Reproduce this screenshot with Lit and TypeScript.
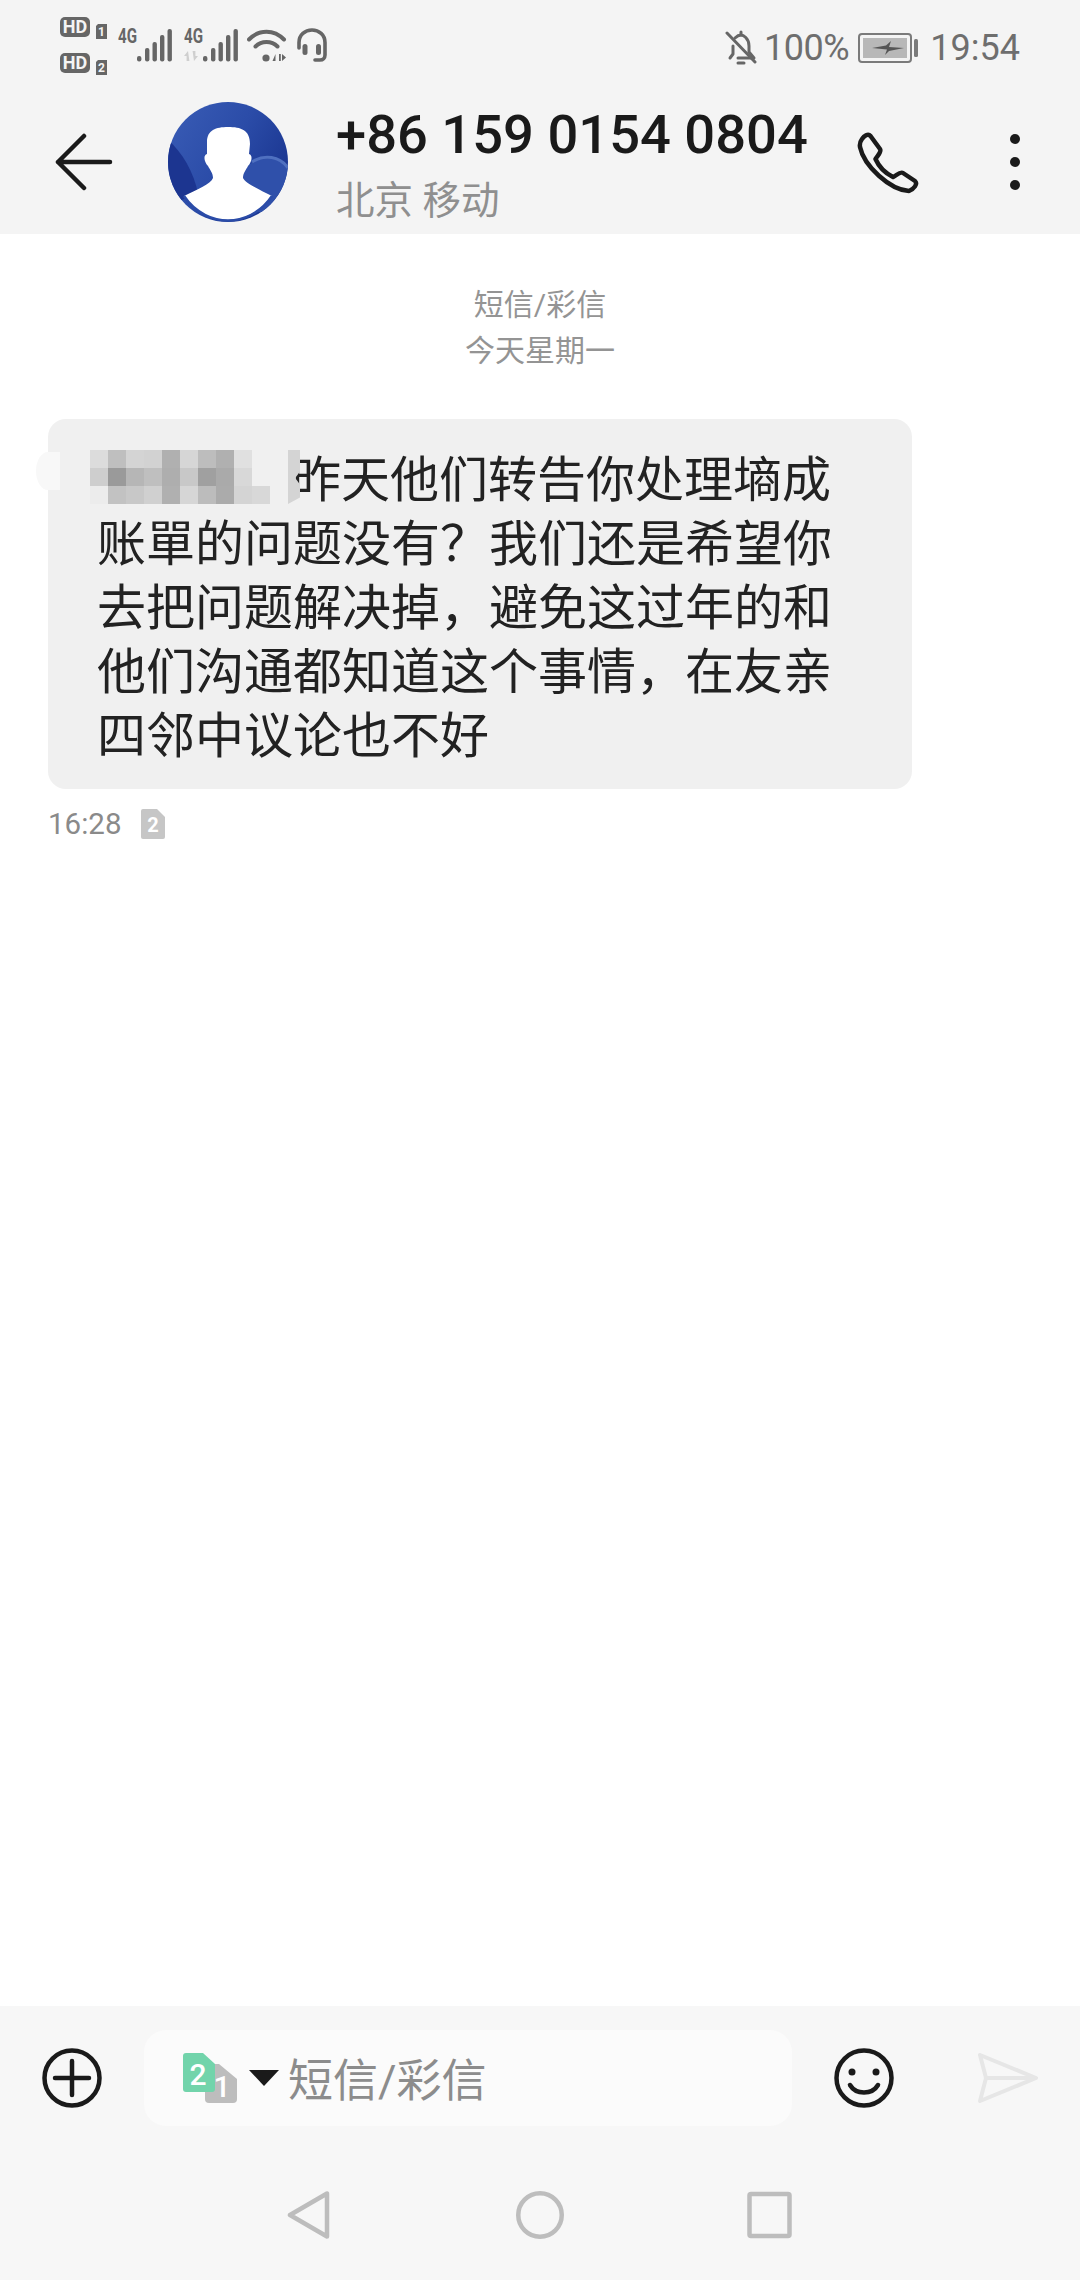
import { LitElement, html, css, svg } from 'lit';
import { customElement } from 'lit/decorators.js';

const MESSAGE_LINES = [
  '昨天他们转告你处理墒成',
  '账單的问题没有？我们还是希望你',
  '去把问题解决掉，避免这过年的和',
  '他们沟通都知道这个事情，在友亲',
  '四邻中议论也不好',
];

// the blurred sender name at the start of the message, row by row
const MOSAIC = [
  ['#dcdcdc', '#bfbfbf', '#d4d4d4', '#d2d2d2', '#b0b0b0', '#d6d6d6', '#bdbdbd', '#b0b0b0', '#e0e0e0', 'transparent'],
  ['#cecece', '#9a9a9a', '#b6b6b6', '#bfbfbf', '#aeaeae', '#c8c8c8', '#a0a0a0', '#aaaaaa', '#d8d8d8', 'transparent'],
  ['#ececec', '#c2c2c2', '#c8c8c8', '#d0d0d0', '#b0b0b0', '#d6d6d6', '#bcbcbc', '#ababab', '#d4d4d4', '#d8d8d8'],
];

const signalBars = (x: number) => svg`
  <rect x="${x}" y="55" width="4.4" height="5.5" rx="2" />
  <rect x="${x + 8}" y="47" width="4.4" height="13.5" rx="2" />
  <rect x="${x + 15.5}" y="41" width="4.4" height="19.5" rx="2" />
  <rect x="${x + 23}" y="34" width="4.4" height="26.5" rx="2" />
  <rect x="${x + 30.5}" y="28" width="4.4" height="32.5" rx="2" />
`;

@customElement('app-root')
export class AppRoot extends LitElement {
  static styles = css`
    :host {
      display: flex;
      flex-direction: column;
      width: 1080px;
      height: 2280px;
      background: #fff;
      font-family: Roboto, 'Noto Sans CJK SC', sans-serif;
      overflow: hidden;
    }

    svg {
      display: block;
      flex: none;
    }

    .top {
      background: #f4f4f4;
      height: 234px;
      flex: none;
    }

    .status {
      height: 90px;
      display: flex;
      align-items: center;
      padding: 0 60px 0 60px;
      color: #6e6e6e;
      font-size: 36px;
    }

    .status-left {
      display: flex;
      align-items: center;
    }

    .status-right {
      margin-left: auto;
      padding-top: 5px;
      display: flex;
      align-items: center;
    }

    .pct {
      margin-left: 7px;
      letter-spacing: -0.4px;
    }

    .battery {
      margin-left: 9px;
    }

    .clock {
      margin-left: 12px;
    }

    .toolbar {
      height: 144px;
      display: flex;
      align-items: center;
      padding-left: 55px;
    }

    .avatar {
      margin-left: 55px;
    }

    .titles {
      margin-left: 48px;
      width: 520px;
      padding-top: 6px;
      display: flex;
      flex-direction: column;
    }

    .number {
      font-size: 54.3px;
      line-height: 60px;
      font-weight: 500;
      color: #1a1a1a;
      white-space: nowrap;
    }

    .carrier {
      font-size: 38.5px;
      line-height: 50px;
      margin-top: 11px;
      color: #8f8f8f;
    }

    .more {
      margin-left: 90px;
    }

    .thread {
      flex: 1;
      padding-top: 48px;
    }

    .notice {
      text-align: center;
      font-size: 30px;
      line-height: 46px;
      color: #949494;
    }

    .bubble {
      position: relative;
      margin: 45px 0 0 48px;
      width: 864px;
      box-sizing: border-box;
      padding: 30px 0 20px 49px;
      background: #f0f0f0;
      border-radius: 18px;
      font-size: 49px;
      line-height: 64px;
      color: #222;
    }

    .line {
      white-space: nowrap;
    }

    .line.first {
      padding-left: 195px;
    }

    .mosaic {
      position: absolute;
      left: 42px;
      top: 31px;
      display: grid;
      grid-template-columns: repeat(10, 18px);
      grid-auto-rows: 18px;
    }

    .sliver {
      position: absolute;
      left: 240px;
      top: 31px;
      width: 12px;
      height: 54px;
      background: #d4d4d4;
      clip-path: polygon(0 0, 100% 0, 100% 40%, 60% 52%, 100% 64%, 100% 88%, 0 100%);
    }

    .smudge {
      position: absolute;
      left: -12px;
      top: 33px;
      width: 24px;
      height: 38px;
      border-radius: 50% 0 0 50%;
      background: #f8f8f8;
    }

    .meta {
      display: flex;
      align-items: center;
      margin: 18px 0 0 48px;
      font-size: 29.5px;
      line-height: 34px;
      color: #8a8a8a;
    }

    .meta svg {
      margin-left: 20px;
    }

    .bottom {
      flex: none;
      background: #f7f7f7;
    }

    .composer {
      height: 143px;
      display: flex;
      align-items: center;
      padding-left: 42px;
    }

    .input {
      margin-left: 42px;
      width: 648px;
      height: 96px;
      box-sizing: border-box;
      padding-left: 39px;
      display: flex;
      align-items: center;
      background: #fbfbfb;
      border-radius: 22px;
      font-size: 45px;
      color: #8c8c8c;
    }

    .caret {
      margin: 0 9px 0 12px;
    }

    .smiley {
      margin-left: 42px;
    }

    .send {
      margin-left: 84px;
    }

    .nav {
      height: 131px;
      display: flex;
      align-items: center;
      justify-content: center;
      gap: 183px;
    }
  `;

  private renderStatusIcons() {
    return html`
      <svg width="48" height="60" viewBox="60 15 48 60">
        <g fill="#666">
          <rect x="60" y="17" width="30" height="20" rx="5" />
          <rect x="60" y="53" width="30" height="20" rx="5" />
          <path d="M98 24h9v15H96V26z" />
          <path d="M98 60h9v15H96V62z" />
        </g>
        <g fill="#f4f4f4" font-family="Roboto" font-weight="700" text-anchor="middle">
          <text x="75" y="33" font-size="18">HD</text>
          <text x="75" y="69" font-size="18">HD</text>
          <text x="101.5" y="36" font-size="12">1</text>
          <text x="101.5" y="72" font-size="12">2</text>
        </g>
      </svg>
      <svg style="margin-left:10px" width="54" height="56" viewBox="118 16 54 56" fill="#666">
        <text x="118" y="42" font-family="Roboto" font-weight="700" font-size="20" textLength="19" lengthAdjust="spacingAndGlyphs">4G</text>
        ${signalBars(137)}
      </svg>
      <svg style="margin-left:12px" width="54" height="56" viewBox="184 16 54 56" fill="#666">
        <text x="184" y="42" font-family="Roboto" font-weight="700" font-size="20" textLength="19" lengthAdjust="spacingAndGlyphs">4G</text>
        <path d="M188 50l-4 5h2.6v5h2.8zM194 60l4-5h-2.6v-5h-2.8z" fill="#cfcfcf" />
        ${signalBars(203)}
      </svg>
      <svg style="margin-left:9px" width="40" height="36" viewBox="247 26 40 36">
        <g fill="none" stroke="#666" stroke-width="4" stroke-linecap="round">
          <path d="M249 38.5C259 28 274 28 284 38.5" />
          <path d="M255.5 45.5C261.5 39.5 271.5 39.5 277.5 45.5" />
        </g>
        <circle cx="266" cy="57" r="3.6" fill="#666" />
        <path d="M275.5 53l-3 7h3zM279 60V53h1.800V60zM282 53v7l4-3.5z" fill="#666" />
      </svg>
      <svg style="margin-left:10px" width="30" height="36" viewBox="297 27 30 36">
        <path d="M299 48v-5.500C299 35 305 30 312 30s13 5 13 12.500V55c0 3-2 5-5 5h-5" fill="none" stroke="#666" stroke-width="3.6" stroke-linecap="round" />
        <rect x="302.5" y="44" width="5" height="11" rx="2.5" fill="#666" />
        <rect x="316" y="44" width="5" height="11" rx="2.5" fill="#666" />
      </svg>
    `;
  }

  private renderAvatar() {
    return html`
      <svg class="avatar" width="120" height="120" viewBox="0 0 120 120">
        <defs>
          <linearGradient id="avatar-bg" x1="0" y1="0" x2="1" y2="0.6">
            <stop offset="0" stop-color="#3a5db6" />
            <stop offset="0.55" stop-color="#2b4ca8" />
            <stop offset="1" stop-color="#1a3590" />
          </linearGradient>
          <clipPath id="avatar-clip"><circle cx="60" cy="60" r="60" /></clipPath>
        </defs>
        <g clip-path="url(#avatar-clip)">
          <rect width="120" height="120" fill="url(#avatar-bg)" />
          <path d="M0 38C14 50 26 70 30 92L8 100L0 90z" fill="#1c3590" />
          <path d="M72 70C88 54 108 52 120 66V110H72z" fill="#2f50aa" />
          <path d="M84 60C96 52 112 54 120 66" fill="none" stroke="#4f70c0" stroke-width="3" />
          <path d="M39 40C39 28 48 25 60 25C73 25 82 28 82 42L81 52C85 53 84 60 80 64C78 68 75 71 75 76C77 81 92 88 104 94C92 110 76 118 60 118C44 118 28 110 16 94C28 88 43 82 45 76C45 71 42 68 40 64C36 60 35 53 39 52Z" fill="#fff" />
        </g>
        <path d="M16 94C28 112 46 118.5 60 118.5C74 118.5 92 112 104 94" fill="none" stroke="#2b4ca8" stroke-width="2.5" />
      </svg>
    `;
  }

  private renderMessage() {
    return html`
      <div class="bubble">
        <div class="smudge"></div>
        <div class="mosaic">
          ${MOSAIC.flat().map((color) => html`<span style="background:${color}"></span>`)}
        </div>
        <div class="sliver"></div>
        ${MESSAGE_LINES.map(
          (line, i) => html`<div class="line ${i === 0 ? 'first' : ''}">${line}</div>`
        )}
      </div>
      <div class="meta">
        <span>16:28</span>
        <svg width="24" height="30" viewBox="0 0 24 30">
          <path d="M2 0H16L24 8V28a2 2 0 0 1-2 2H2a2 2 0 0 1-2-2V2a2 2 0 0 1 2-2z" fill="#c6c6c6" />
          <text x="12" y="23" fill="#fff" font-family="Roboto" font-weight="700" font-size="20" text-anchor="middle">2</text>
        </svg>
      </div>
    `;
  }

  render() {
    return html`
      <div class="top">
        <div class="status">
          <div class="status-left">${this.renderStatusIcons()}</div>
          <div class="status-right">
            <svg width="32" height="36" viewBox="0 0 32 36" fill="none" stroke="#666" stroke-width="3" stroke-linecap="round" stroke-linejoin="round">
              <path d="M10 8C12 6 14 5 16 5s8 3 8 11v6l5 6H13M5 28l3-4v-8" />
              <path d="M16 2v3M13 33h6" />
              <path d="M2 3L30 32" />
            </svg>
            <span class="pct">100%</span>
            <svg class="battery" width="60" height="30" viewBox="0 0 60 30">
              <rect x="1" y="1" width="52" height="28" rx="3" fill="none" stroke="#7a7a7a" stroke-width="2" />
              <rect x="5" y="5" width="44" height="20" fill="#b8b8b8" />
              <path d="M14 15L28 12.5L33 8L31 14L46 15L31 18L27 22L29 16.5Z" fill="#555" />
              <rect x="56" y="6" width="4" height="18" rx="1.5" fill="#7a7a7a" />
            </svg>
            <span class="clock">19:54</span>
          </div>
        </div>
        <div class="toolbar">
          <svg width="58" height="58" viewBox="0 0 58 58" fill="none" stroke="#1a1a1a" stroke-width="4.5" stroke-linecap="round" stroke-linejoin="round">
            <path d="M29 3L3 29L29 55M3 29H55" />
          </svg>
          ${this.renderAvatar()}
          <div class="titles">
            <div class="number">+86 159 0154 0804</div>
            <div class="carrier">北京 移动</div>
          </div>
          <svg width="64" height="64" viewBox="0 0 64 64" fill="none" stroke="#1a1a1a" stroke-width="4.5" stroke-linejoin="round">
            <path d="M6 9C8 6 12 3 14.5 6L24 19C26 22 21 26 19.5 29C23 37 29 43 37 47C40 46 44 41 47 43L59 51C62 54 58 59 53 61C34 60 8 36 4 17C3.5 14 4.5 11 6 9Z" />
          </svg>
          <svg class="more" width="10" height="56" viewBox="0 0 10 56" fill="#1a1a1a">
            <circle cx="5" cy="5" r="5" />
            <circle cx="5" cy="28" r="5" />
            <circle cx="5" cy="51" r="5" />
          </svg>
        </div>
      </div>

      <div class="thread">
        <div class="notice">短信/彩信</div>
        <div class="notice">今天星期一</div>
        ${this.renderMessage()}
      </div>

      <div class="bottom">
        <div class="composer">
          <svg width="60" height="60" viewBox="0 0 60 60" fill="none" stroke="#1a1a1a" stroke-width="4.5" stroke-linecap="round">
            <circle cx="30" cy="30" r="27.5" />
            <path d="M13 30H47M30 13V47" />
          </svg>
          <div class="input">
            <svg width="54" height="62" viewBox="0 -6 54 62">
              <path d="M24 11H36L54 26V46a4 4 0 0 1-4 4H26a4 4 0 0 1-4-4V13z" fill="#bdbdbd" />
              <path d="M3 0H20L32 11V36a3 3 0 0 1-3 3H3a3 3 0 0 1-3-3V3a3 3 0 0 1 3-3z" fill="#72d4ab" />
              <text x="15" y="32" fill="#fff" font-family="Roboto" font-weight="500" font-size="30" text-anchor="middle">2</text>
              <text x="39" y="44" fill="#fff" font-family="Roboto" font-weight="500" font-size="30" text-anchor="middle">1</text>
            </svg>
            <svg class="caret" width="30" height="16" viewBox="0 0 30 16"><path d="M0 0H30L15 16z" fill="#1a1a1a" /></svg>
            <span>短信/彩信</span>
          </div>
          <svg class="smiley" width="60" height="60" viewBox="0 0 60 60" fill="none" stroke="#1a1a1a" stroke-width="4.5" stroke-linecap="round">
            <circle cx="30" cy="30" r="27.5" />
            <circle cx="18" cy="24" r="3.5" fill="#1a1a1a" stroke="none" />
            <circle cx="42" cy="24" r="3.5" fill="#1a1a1a" stroke="none" />
            <path d="M16 37C22 47 38 47 44 37" />
          </svg>
          <svg class="send" width="60" height="50" viewBox="0 0 60 50" fill="none" stroke="#e6e6e6" stroke-width="4" stroke-linejoin="round">
            <path d="M2 2L58 25L2 48L8 25ZM8 25H58" />
          </svg>
        </div>
        <div class="nav">
          <svg width="48" height="48" viewBox="0 0 48 48" fill="none" stroke="#bdbdbd" stroke-width="4.5" stroke-linejoin="round">
            <path d="M42 2.5V45.5L5 24Z" />
          </svg>
          <svg width="48" height="48" viewBox="0 0 48 48" fill="none" stroke="#bdbdbd" stroke-width="4.5">
            <circle cx="24" cy="24" r="21.75" />
          </svg>
          <svg width="48" height="48" viewBox="0 0 48 48" fill="none" stroke="#bdbdbd" stroke-width="4.5" stroke-linejoin="round">
            <rect x="2.5" y="3" width="40" height="42" rx="1.5" />
          </svg>
        </div>
      </div>
    `;
  }
}
